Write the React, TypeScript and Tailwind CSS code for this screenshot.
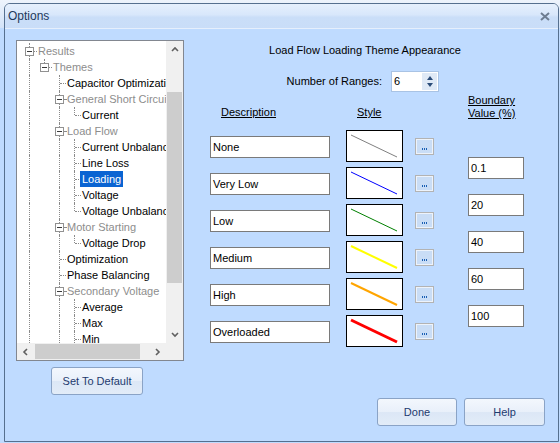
import React from 'react';

type Row = { t: string; l: number; g?: boolean; last?: boolean; sel?: boolean };

const rows: Row[] = [
  { t: 'Results', l: 0, g: true },
  { t: 'Themes', l: 1, g: true },
  { t: 'Capacitor Optimization', l: 2 },
  { t: 'General Short Circuit', l: 2, g: true },
  { t: 'Current', l: 3, last: true },
  { t: 'Load Flow', l: 2, g: true },
  { t: 'Current Unbalance', l: 3 },
  { t: 'Line Loss', l: 3 },
  { t: 'Loading', l: 3, sel: true },
  { t: 'Voltage', l: 3 },
  { t: 'Voltage Unbalance', l: 3, last: true },
  { t: 'Motor Starting', l: 2, g: true },
  { t: 'Voltage Drop', l: 3, last: true },
  { t: 'Optimization', l: 2 },
  { t: 'Phase Balancing', l: 2 },
  { t: 'Secondary Voltage', l: 2, g: true },
  { t: 'Average', l: 3 },
  { t: 'Max', l: 3 },
  { t: 'Min', l: 3 },
];

const vLine = ['left-[12px]', 'left-[27px]', 'left-[42px]', 'left-[57px]'];
const leafConn = ['left-[13px] w-[7px]', 'left-[28px] w-[7px]', 'left-[43px] w-[6px]', 'left-[58px] w-[6px]'];
const groupConn = ['left-[17px] w-[3px]', 'left-[32px] w-[3px]', 'left-[47px] w-[2px]', 'left-[62px] w-[2px]'];
const boxPos = ['left-[8px]', 'left-[23px]', 'left-[38px]', 'left-[53px]'];
const textMl = ['ml-[19px]', 'ml-[34px]', 'ml-[48px]', 'ml-[63px]'];

const dot = 'border-dotted border-[#8a8a8a]';

function TreeRow({ r, i }: { r: Row; i: number }) {
  return (
    <div className="relative h-[16px] shrink-0 flex items-center whitespace-nowrap">
      <span className={`absolute top-0 bottom-0 ${vLine[0]} border-l ${dot}`} />
      {i === 1 && <span className={`absolute top-0 h-[8px] ${vLine[1]} border-l ${dot}`} />}
      {i >= 2 && <span className={`absolute top-0 bottom-0 ${vLine[2]} border-l ${dot}`} />}
      {r.l === 3 && (
        <span className={`absolute top-0 ${r.last ? 'h-[8px]' : 'bottom-0'} ${vLine[3]} border-l ${dot}`} />
      )}
      <span className={`absolute top-[8px] h-0 border-t ${dot} ${r.g ? groupConn[r.l] : leafConn[r.l]}`} />
      {r.g && (
        <span
          className={`absolute top-[4px] ${boxPos[r.l]} w-[9px] h-[9px] border border-[#919191] bg-white flex items-center justify-center`}
        >
          <span className="w-[5px] h-[1px] bg-[#3a3a3a]" />
        </span>
      )}
      <span
        className={`relative ${textMl[r.l]} px-[2px] h-[16px] leading-[16px] text-[11px] ${
          r.sel ? 'bg-[#0a64d2] text-white' : r.g ? 'text-[#8d8d8d]' : 'text-black'
        }`}
      >
        {r.t}
      </span>
    </div>
  );
}

function Chevron({ dir }: { dir: 'up' | 'down' | 'left' | 'right' }) {
  const d =
    dir === 'up'
      ? 'M1 5 L4 2 L7 5'
      : dir === 'down'
      ? 'M1 2 L4 5 L7 2'
      : dir === 'left'
      ? 'M5 1 L2 4 L5 7'
      : 'M2 1 L5 4 L2 7';
  return (
    <svg width="8" height="8" viewBox="0 0 8 8">
      <path d={d} fill="none" stroke="#606060" strokeWidth="1.6" />
    </svg>
  );
}

function Tree() {
  return (
    <div className="w-[168px] h-[321px] border border-[#828790] bg-white flex flex-col">
      <div className="flex flex-1 min-h-0">
        <div className="w-[149px] h-[302px] overflow-hidden flex flex-col pt-[2px]">
          {rows.map((r, i) => (
            <TreeRow key={i} r={r} i={i} />
          ))}
        </div>
        <div className="w-[17px] h-[302px] bg-[#f0f0f0] flex flex-col">
          <div className="h-[17px] flex items-center justify-center">
            <Chevron dir="up" />
          </div>
          <div className="ml-[1px] mt-[34px] w-[15px] h-[191px] bg-[#cdcdcd]" />
          <div className="flex-1" />
          <div className="h-[17px] flex items-center justify-center">
            <Chevron dir="down" />
          </div>
        </div>
      </div>
      <div className="h-[17px] flex bg-[#f0f0f0]">
        <div className="w-[17px] flex items-center justify-center">
          <Chevron dir="left" />
        </div>
        <div className="ml-[1px] mt-[1px] w-[105px] h-[15px] bg-[#cdcdcd]" />
        <div className="flex-1" />
        <div className="w-[17px] flex items-center justify-center">
          <Chevron dir="right" />
        </div>
        <div className="w-[17px]" />
      </div>
    </div>
  );
}

const btn =
  'border border-[#8aa3c6] rounded-[3px] bg-[linear-gradient(to_bottom,#f3f7fd_0%,#e9f0fa_48%,#dce7f6_52%,#e2ecf8_100%)] text-[#1e3a6e] text-[11px] flex items-center justify-center';

const descs = ['None', 'Very Low', 'Low', 'Medium', 'High', 'Overloaded'];
const styles = [
  { c: '#808080', w: 1 },
  { c: '#0000ff', w: 1 },
  { c: '#008000', w: 1 },
  { c: '#ffff00', w: 2 },
  { c: '#ffa500', w: 2 },
  { c: '#ff0000', w: 3 },
];
const bounds = ['0.1', '20', '40', '60', '100'];

export default function App() {
  return (
    <div className="w-[560px] h-[443px] overflow-hidden bg-[linear-gradient(to_bottom,#eef4fc_0px,#d3e3f8_28px,#bfdbff_28px)] font-['Liberation_Sans',Arial,sans-serif] text-[11px] text-black">
      <div className="ml-[4px] mt-[3px] w-[555px] h-[439px] border border-[#56708f] rounded-t-[6px] overflow-hidden flex flex-col">
        <div className="h-[25px] shrink-0 border-b border-[#e6effc] bg-[linear-gradient(to_bottom,#e6f0fd_0%,#d8e7fb_45%,#cadef8_55%,#c9ddf8_100%)] flex items-center justify-between pl-[3px] pr-[8px]">
          <span className="text-[12px] text-[#1e395b]">Options</span>
          <svg width="10" height="9" viewBox="0 0 10 9">
            <path d="M1 1 L9 8 M9 1 L1 8" stroke="#6e7d91" strokeWidth="2" />
          </svg>
        </div>
        <div className="flex-1 flex bg-[#bfdbff]">
          <div className="w-[179px] shrink-0 pl-[11px] pt-[11px] flex flex-col">
            <Tree />
            <div className={`${btn} mt-[6px] ml-[35px] w-[92px] h-[28px]`}>Set To Default</div>
          </div>
          <div className="flex-1 flex flex-col pl-[26px] pt-[15px] pr-[13px] pb-[15px]">
            <div className="w-[310px] h-[13px] leading-[13px] text-center">Load Flow Loading Theme Appearance</div>
            <div className="mt-[14px] h-[21px] flex items-center">
              <div className="w-[172px] text-right">Number of Ranges:</div>
              <div className="ml-[9px] w-[48px] h-[21px] border border-[#a9c3e4] bg-white flex items-center">
                <span className="pl-[2px] flex-1">6</span>
                <div className="w-[15px] h-[17px] mr-[1px] bg-[#dfe9f6] flex flex-col items-center justify-center gap-[3px]">
                  <svg width="6" height="4" viewBox="0 0 6 4">
                    <path d="M0 4 L3 0 L6 4 Z" fill="#2a4b78" />
                  </svg>
                  <svg width="6" height="4" viewBox="0 0 6 4">
                    <path d="M0 0 L6 0 L3 4 Z" fill="#2a4b78" />
                  </svg>
                </div>
              </div>
            </div>
            <div className="mt-[2px] flex items-start">
              <div className="w-[120px] flex flex-col">
                <div className="mt-[12px] h-[13px] leading-[13px] pl-[11px] underline">Description</div>
                <div className="mt-[17px] flex flex-col gap-[15px]">
                  {descs.map((d) => (
                    <div key={d} className="h-[22px] border border-[#7a7a7a] bg-white pl-[2px] flex items-center">
                      {d}
                    </div>
                  ))}
                </div>
              </div>
              <div className="ml-[16px] w-[57px] flex flex-col">
                <div className="mt-[12px] h-[13px] leading-[13px] pl-[11px] underline">Style</div>
                <div className="mt-[11px] flex flex-col gap-[5px]">
                  {styles.map((s, i) => (
                    <div key={i} className="h-[32px] border border-black bg-white">
                      <svg width="55" height="30" viewBox="0 0 55 30">
                        <line x1="4" y1="4" x2="50" y2="26" stroke={s.c} strokeWidth={s.w} />
                      </svg>
                    </div>
                  ))}
                </div>
              </div>
              <div className="ml-[12px] w-[19px] flex flex-col mt-[44px] gap-[20px]">
                {styles.map((_, i) => (
                  <div
                    key={i}
                    className="h-[17px] border border-[#b3b3b3] bg-[#c9ddf6] shadow-[inset_0_0_0_1px_#edf3fb] flex items-end justify-center gap-[1px] pb-[4px]"
                  >
                    <span className="w-[1px] h-[2px] bg-[#1a5fb4]" />
                    <span className="w-[1px] h-[2px] bg-[#1a5fb4]" />
                    <span className="w-[1px] h-[2px] bg-[#1a5fb4]" />
                  </div>
                ))}
              </div>
              <div className="ml-[34px] w-[56px] flex flex-col">
                <div className="leading-[13px] underline">
                  Boundary
                  <br />
                  Value (%)
                </div>
                <div className="mt-[37px] flex flex-col gap-[15px]">
                  {bounds.map((b) => (
                    <div key={b} className="h-[22px] border border-[#7a7a7a] bg-white pl-[2px] flex items-center">
                      {b}
                    </div>
                  ))}
                </div>
              </div>
            </div>
            <div className="mt-auto flex justify-end gap-[7px]">
              <div className={`${btn} w-[80px] h-[28px]`}>Done</div>
              <div className={`${btn} w-[81px] h-[28px]`}>Help</div>
            </div>
          </div>
        </div>
      </div>
    </div>
  );
}
